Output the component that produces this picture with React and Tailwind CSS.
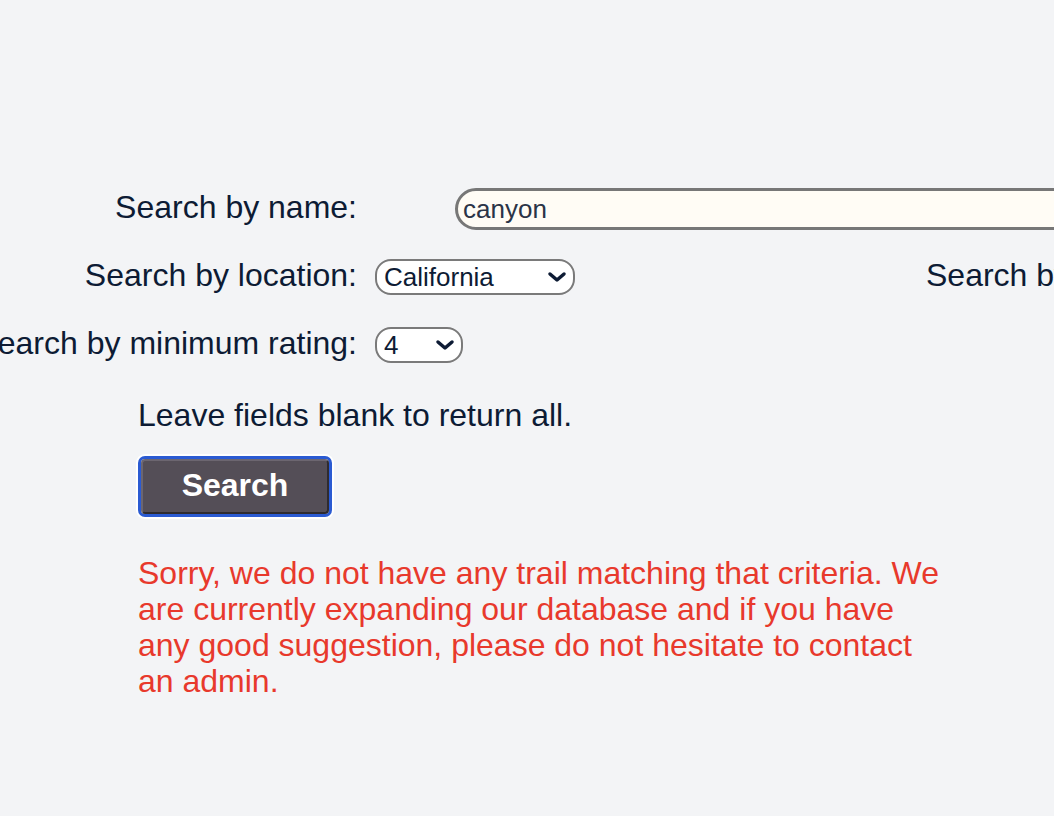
import React, { useState } from 'react';

const Chevron = () => (
  <svg width="20" height="14" viewBox="0 0 20 14" className="pointer-events-none absolute right-[8px] top-1/2 -translate-y-1/2">
    <path d="M3 4 L10 10 L17 4" fill="none" stroke="#0d1b34" strokeWidth="3.5" strokeLinecap="round" strokeLinejoin="round" />
  </svg>
);

const SelectBox = ({ value, options, width, onChange }) => (
  <div className={`relative ${width}`}>
    <select
      value={value}
      onChange={(e) => onChange(e.target.value)}
      className="h-[36px] w-full appearance-none rounded-[16px] border-2 border-[#7a7a7a] bg-white pl-[7px] text-[26px] leading-none text-[#0d1b34] outline-none"
    >
      {options.map(o => <option key={o} value={o}>{o}</option>)}
    </select>
    <Chevron />
  </div>
);

const App = () => {
  const [name, setName] = useState('canyon');
  const [location, setLocation] = useState('California');
  const [rating, setRating] = useState('4');

  return (
    <div className="min-h-[816px] w-[1054px] overflow-hidden bg-[#f3f4f6] text-[#0d1b34]" style={{ fontFamily: '"Liberation Sans", Arial, sans-serif' }}>
      <div className="pt-[175px]">
        {/* recherche par nom */}
        <div className="flex h-[68px] items-center">
          <div className="flex w-[357px] shrink-0 justify-end pb-[4px]">
            <span className="shrink-0 whitespace-nowrap text-[32px] leading-none">Search by name:</span>
          </div>
          <input
            value={name}
            onChange={(e) => setName(e.target.value)}
            className="ml-[98px] h-[42px] w-[720px] shrink-0 rounded-full border-[3px] border-[#777777] bg-[#fffcf5] px-[5px] text-[26px] text-[#2b3447] outline-none"
          />
        </div>

        <div className="flex h-[68px] items-center">
          <div className="flex w-[357px] shrink-0 justify-end pb-[4px]">
            <span className="shrink-0 whitespace-nowrap text-[32px] leading-none">Search by location:</span>
          </div>
          <div className="ml-[18px] shrink-0">
            <SelectBox value={location} onChange={setLocation} width="w-[200px]" options={['California', 'Oregon', 'Washington', 'Nevada']} />
          </div>
          <span className="ml-[351px] shrink-0 whitespace-nowrap pb-[4px] text-[32px] leading-none">Search by difficulty:</span>
        </div>

        <div className="flex h-[68px] items-center">
          <div className="flex w-[357px] shrink-0 justify-end pb-[4px]">
            <span className="shrink-0 whitespace-nowrap text-[32px] leading-none">Search by minimum rating:</span>
          </div>
          <div className="ml-[18px] shrink-0">
            <SelectBox value={rating} onChange={setRating} width="w-[88px]" options={['1', '2', '3', '4', '5']} />
          </div>
        </div>

        <div className="pl-[138px]">
          <p className="mt-[18px] text-[32px] leading-[36px]">Leave fields blank to return all.</p>

          <button className="mt-[23px] block h-[61px] w-[194px] rounded-[7px] border-[3px] border-[#2a5ad2] p-0 shadow-[0_0_0_2px_#ffffff]">
            <div className="flex h-full w-full items-center justify-center rounded-[4px] border-[2px] border-[#6c6670] border-b-[#2e2b30] border-r-[#2e2b30] bg-[#544e57] pb-[4px] text-[32px] font-bold leading-none text-white">
              Search
            </div>
          </button>

          <p className="mt-[38px] w-[812px] text-[32px] leading-[36px] text-[#e8392c]">
            Sorry, we do not have any trail matching that criteria. We are currently expanding our database and if you have any good suggestion, please do not hesitate to contact an admin.
          </p>
        </div>
      </div>
    </div>
  );
};

export default App;
